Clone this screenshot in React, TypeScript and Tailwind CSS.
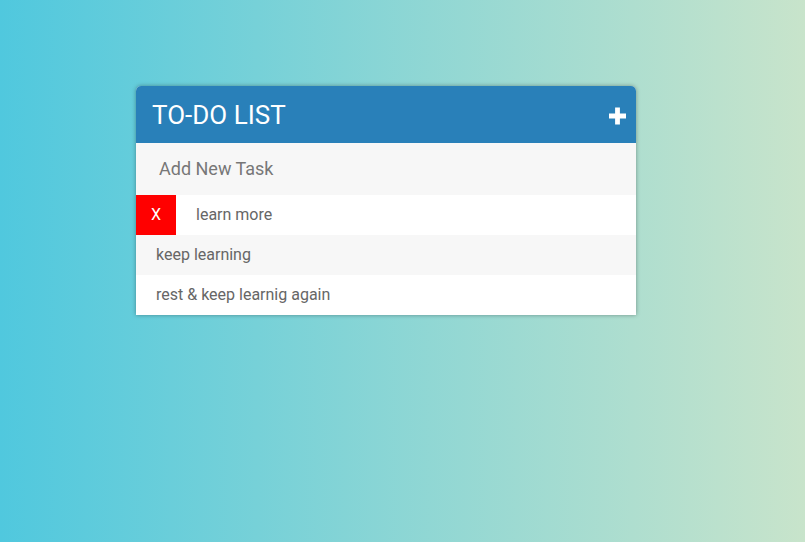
import React from 'react';

const todos = [
  { text: "learn more", hover: true },
  { text: "keep learning", hover: false },
  { text: "rest & keep learnig again", hover: false },
];

export default function App() {
  return (
    <div
      className="min-h-[542px] w-full bg-[linear-gradient(to_right,#50c8de,#c8e4cb)] pt-[86px] pl-[136px]"
      style={{ fontFamily: "Roboto, 'Liberation Sans', sans-serif" }}
    >
      <div className="w-[500px] rounded-t-[5px] bg-white shadow-[0_0_4px_rgba(0,0,0,0.35)]">
        <div className="flex h-[57px] items-center justify-between rounded-t-[5px] bg-[#2980b9] pl-4 pr-[10px]">
          <h1 className="mt-[2px] text-[26px] font-normal uppercase text-white">To-Do List</h1>
          <svg width="17" height="18" viewBox="0 0 17 18" className="mt-[2px]">
            <path d="M8.5 0.5v17M0 9h17" stroke="#fff" strokeWidth="4.8" />
          </svg>
        </div>
        <div className="flex h-[52px] items-center bg-[#f7f7f7] pl-[23px]">
          <span className="mb-[1px] text-[18px] text-[#777]">Add New Task</span>
        </div>
        <ul>
          {todos.map((t, i) => (
            <li
              key={i}
              className={`flex h-10 items-center text-base text-[#666] ${i % 2 === 1 ? "bg-[#f7f7f7]" : "bg-white"}`}
            >
              {t.hover && (
                <span className="flex h-10 w-10 items-center justify-center bg-[#ff0000] text-white">X</span>
              )}
              <span className="pl-5">{t.text}</span>
            </li>
          ))}
        </ul>
      </div>
    </div>
  );
}
